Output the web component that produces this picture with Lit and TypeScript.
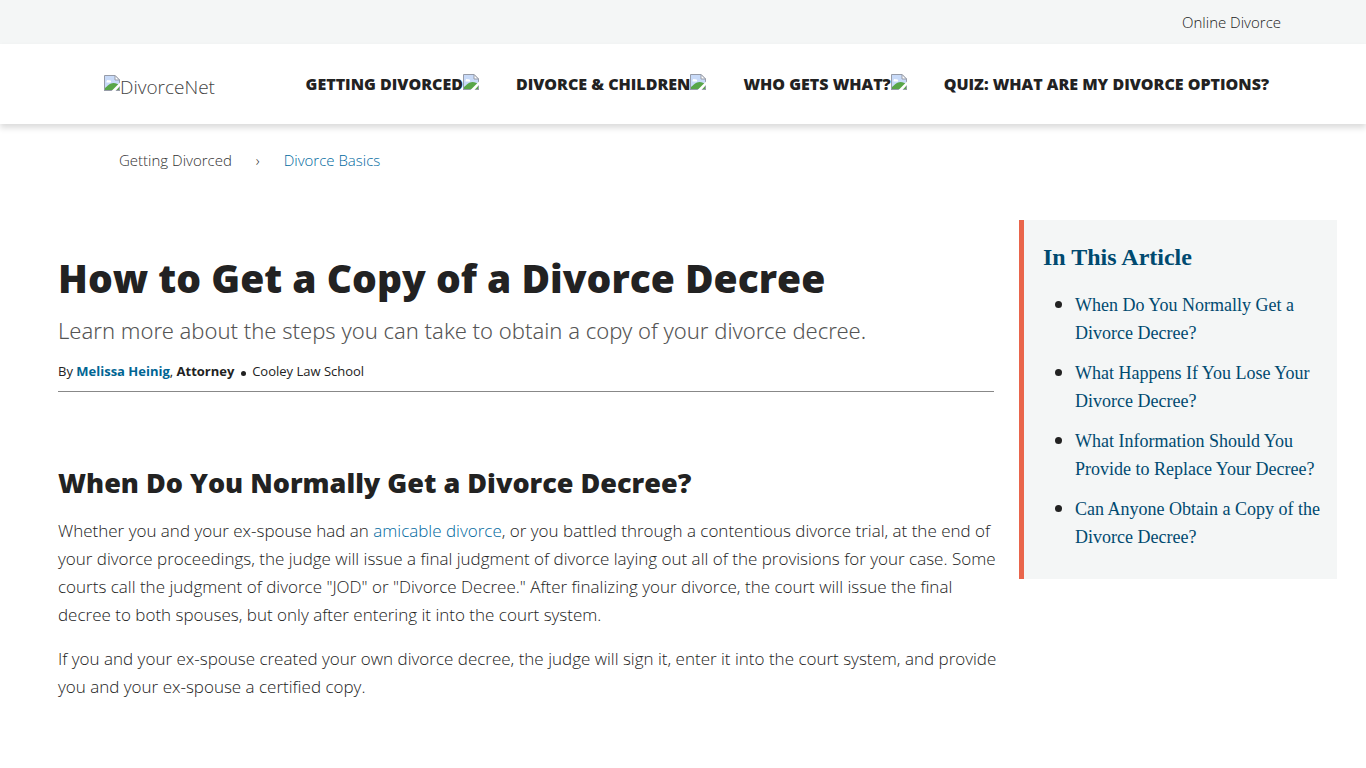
import { LitElement, html, css } from "lit";
import { customElement } from "lit/decorators.js";

const missingImage = html`<svg class="missing" viewBox="0 0 16 16" width="16" height="16" aria-hidden="true">
  <path d="M0.5 15.5V0.5H11L15.5 5V15.5Z" fill="#c8daf8" />
  <path d="M2.500 6.500C2.500 5 4.500 4.500 5 5.500C6.500 5 7.500 6 7 7.500H2.500Z" fill="#fff" />
  <path d="M1 15V13C3.500 11 6 8 9.500 8C12 8 14 9 15 10V15Z" fill="#58a648" />
  <path d="M0.5 16V0.5H11L15.5 5V16M0 15.5H16" fill="none" stroke="#979ca8" />
  <path d="M7.500 16L16 7.500V11L11.500 16Z" fill="#fff" />
  <path d="M11 0.500V5H15.500Z" fill="#fff" stroke="#979ca8" />
</svg>`;

@customElement("app-root")
export class AppRoot extends LitElement {
  static styles = css`
    :host {
      display: block;
      min-height: 100vh;
      background: #fff;
      color: #222;
      font-family: "Open Sans", "Noto Sans", sans-serif;
      font-weight: 300;
      font-size: 17px;
      line-height: 28px;
    }
    a { color: inherit; text-decoration: none; }
    h1, h2, p, ul, ol { margin: 0; }
    .utility {
      display: flex;
      justify-content: flex-end;
      padding: 8px 85px;
      background: #f4f6f6;
      font-size: 15px;
    }
    .header {
      display: flex;
      align-items: center;
      justify-content: space-between;
      height: 80px;
      padding: 0 97px 0 104px;
      background: #fff;
      box-shadow: 0 4px 6px rgba(0, 0, 0, 0.14);
    }
    .missing { flex: none; display: block; }
    .logo {
      display: flex;
      align-items: flex-start;
      padding-top: 6px;
      font-size: 19px;
      line-height: 24px;
      color: #444;
    }
    .menu {
      display: flex;
      gap: 37px;
      font-size: 16px;
      font-weight: 800;
      text-transform: uppercase;
    }
    .menu a { display: flex; align-items: baseline; }
    .crumbs {
      display: flex;
      gap: 24px;
      padding: 22px 119px;
      margin: 0;
      list-style: none;
      font-size: 15px;
      color: #333;
    }
    .crumbs .current { color: #00699e; }
    .page {
      display: grid;
      grid-template-columns: minmax(0, 1fr) 318px;
      align-items: start;
      gap: 25px;
      padding: 24px 29px 40px 58px;
    }
    .title {
      padding-top: 32px;
      font-size: 39px;
      font-weight: 800;
      line-height: 52px;
    }
    .summary {
      padding-top: 8px;
      font-family: "Noto Sans", "Open Sans", sans-serif;
      font-size: 22px;
      line-height: 36px;
      color: #555;
    }
    .byline {
      padding: 12px 0 9px;
      border-bottom: 1px solid #888;
      font-size: 13px;
      font-weight: 400;
      line-height: 22px;
    }
    .byline b { font-weight: 700; }
    .byline .dot {
      display: inline-block;
      width: 5px;
      height: 5px;
      margin: 0 3px;
      border-radius: 50%;
      background: #222;
    }
    .author { color: #006593; font-weight: 700; }
    .section {
      padding: 72px 0 15px;
      font-size: 27px;
      font-weight: 800;
      line-height: 38px;
    }
    .text { margin: 0 -8px 16px 0; color: #222; }
    .text a { color: #00699e; }
    .contents {
      padding: 20px 14px 28px 19px;
      border-left: 5px solid #e9654b;
      background: #f4f6f6;
      font-family: "Liberation Serif", serif;
      font-weight: 400;
      color: #004a70;
    }
    .contents h2 { font-size: 24px; line-height: 34px; }
    .contents ul { padding: 16px 0 0 32px; font-size: 18px; }
    .contents li { margin-bottom: 11px; }
    .contents li::marker { color: #222; font-size: 22px; }
    .contents li:last-child { margin-bottom: 0; }
  `;

  render() {
    return html`
      <div class="utility"><a href="#">Online Divorce</a></div>
      <header class="header">
        <a class="logo" href="#">${missingImage}DivorceNet</a>
        <nav class="menu">
          <a href="#">Getting Divorced${missingImage}</a>
          <a href="#">Divorce &amp; Children${missingImage}</a>
          <a href="#">Who Gets What?${missingImage}</a>
          <a href="#">Quiz: What Are My Divorce Options?</a>
        </nav>
      </header>
      <ol class="crumbs">
        <li><a href="#">Getting Divorced</a></li>
        <li aria-hidden="true">›</li>
        <li><a class="current" href="#">Divorce Basics</a></li>
      </ol>
      <div class="page">
        <main>
          <h1 class="title">How to Get a Copy of a Divorce Decree</h1>
          <p class="summary">Learn more about the steps you can take to obtain a copy of your divorce decree.</p>
          <p class="byline">By <a class="author" href="#">Melissa Heinig</a>, <b>Attorney</b> <span class="dot"></span> Cooley Law School</p>
          <h2 class="section" id="when">When Do You Normally Get a Divorce Decree?</h2>
          <p class="text">Whether you and your ex-spouse had an <a href="#">amicable divorce</a>, or you battled through a contentious divorce trial, at the end of your divorce proceedings, the judge will issue a final judgment of divorce laying out all of the provisions for your case. Some courts call the judgment of divorce "JOD" or "Divorce Decree." After finalizing your divorce, the court will issue the final decree to both spouses, but only after entering it into the court system.</p>
          <p class="text">If you and your ex-spouse created your own divorce decree, the judge will sign it, enter it into the court system, and provide you and your ex-spouse a certified copy.</p>
        </main>
        <aside class="contents">
          <h2>In This Article</h2>
          <ul>
            <li><a href="#when">When Do You Normally Get a Divorce Decree?</a></li>
            <li><a href="#">What Happens If You Lose Your Divorce Decree?</a></li>
            <li><a href="#">What Information Should You Provide to Replace Your Decree?</a></li>
            <li><a href="#">Can Anyone Obtain a Copy of the Divorce Decree?</a></li>
          </ul>
        </aside>
      </div>
    `;
  }
}
